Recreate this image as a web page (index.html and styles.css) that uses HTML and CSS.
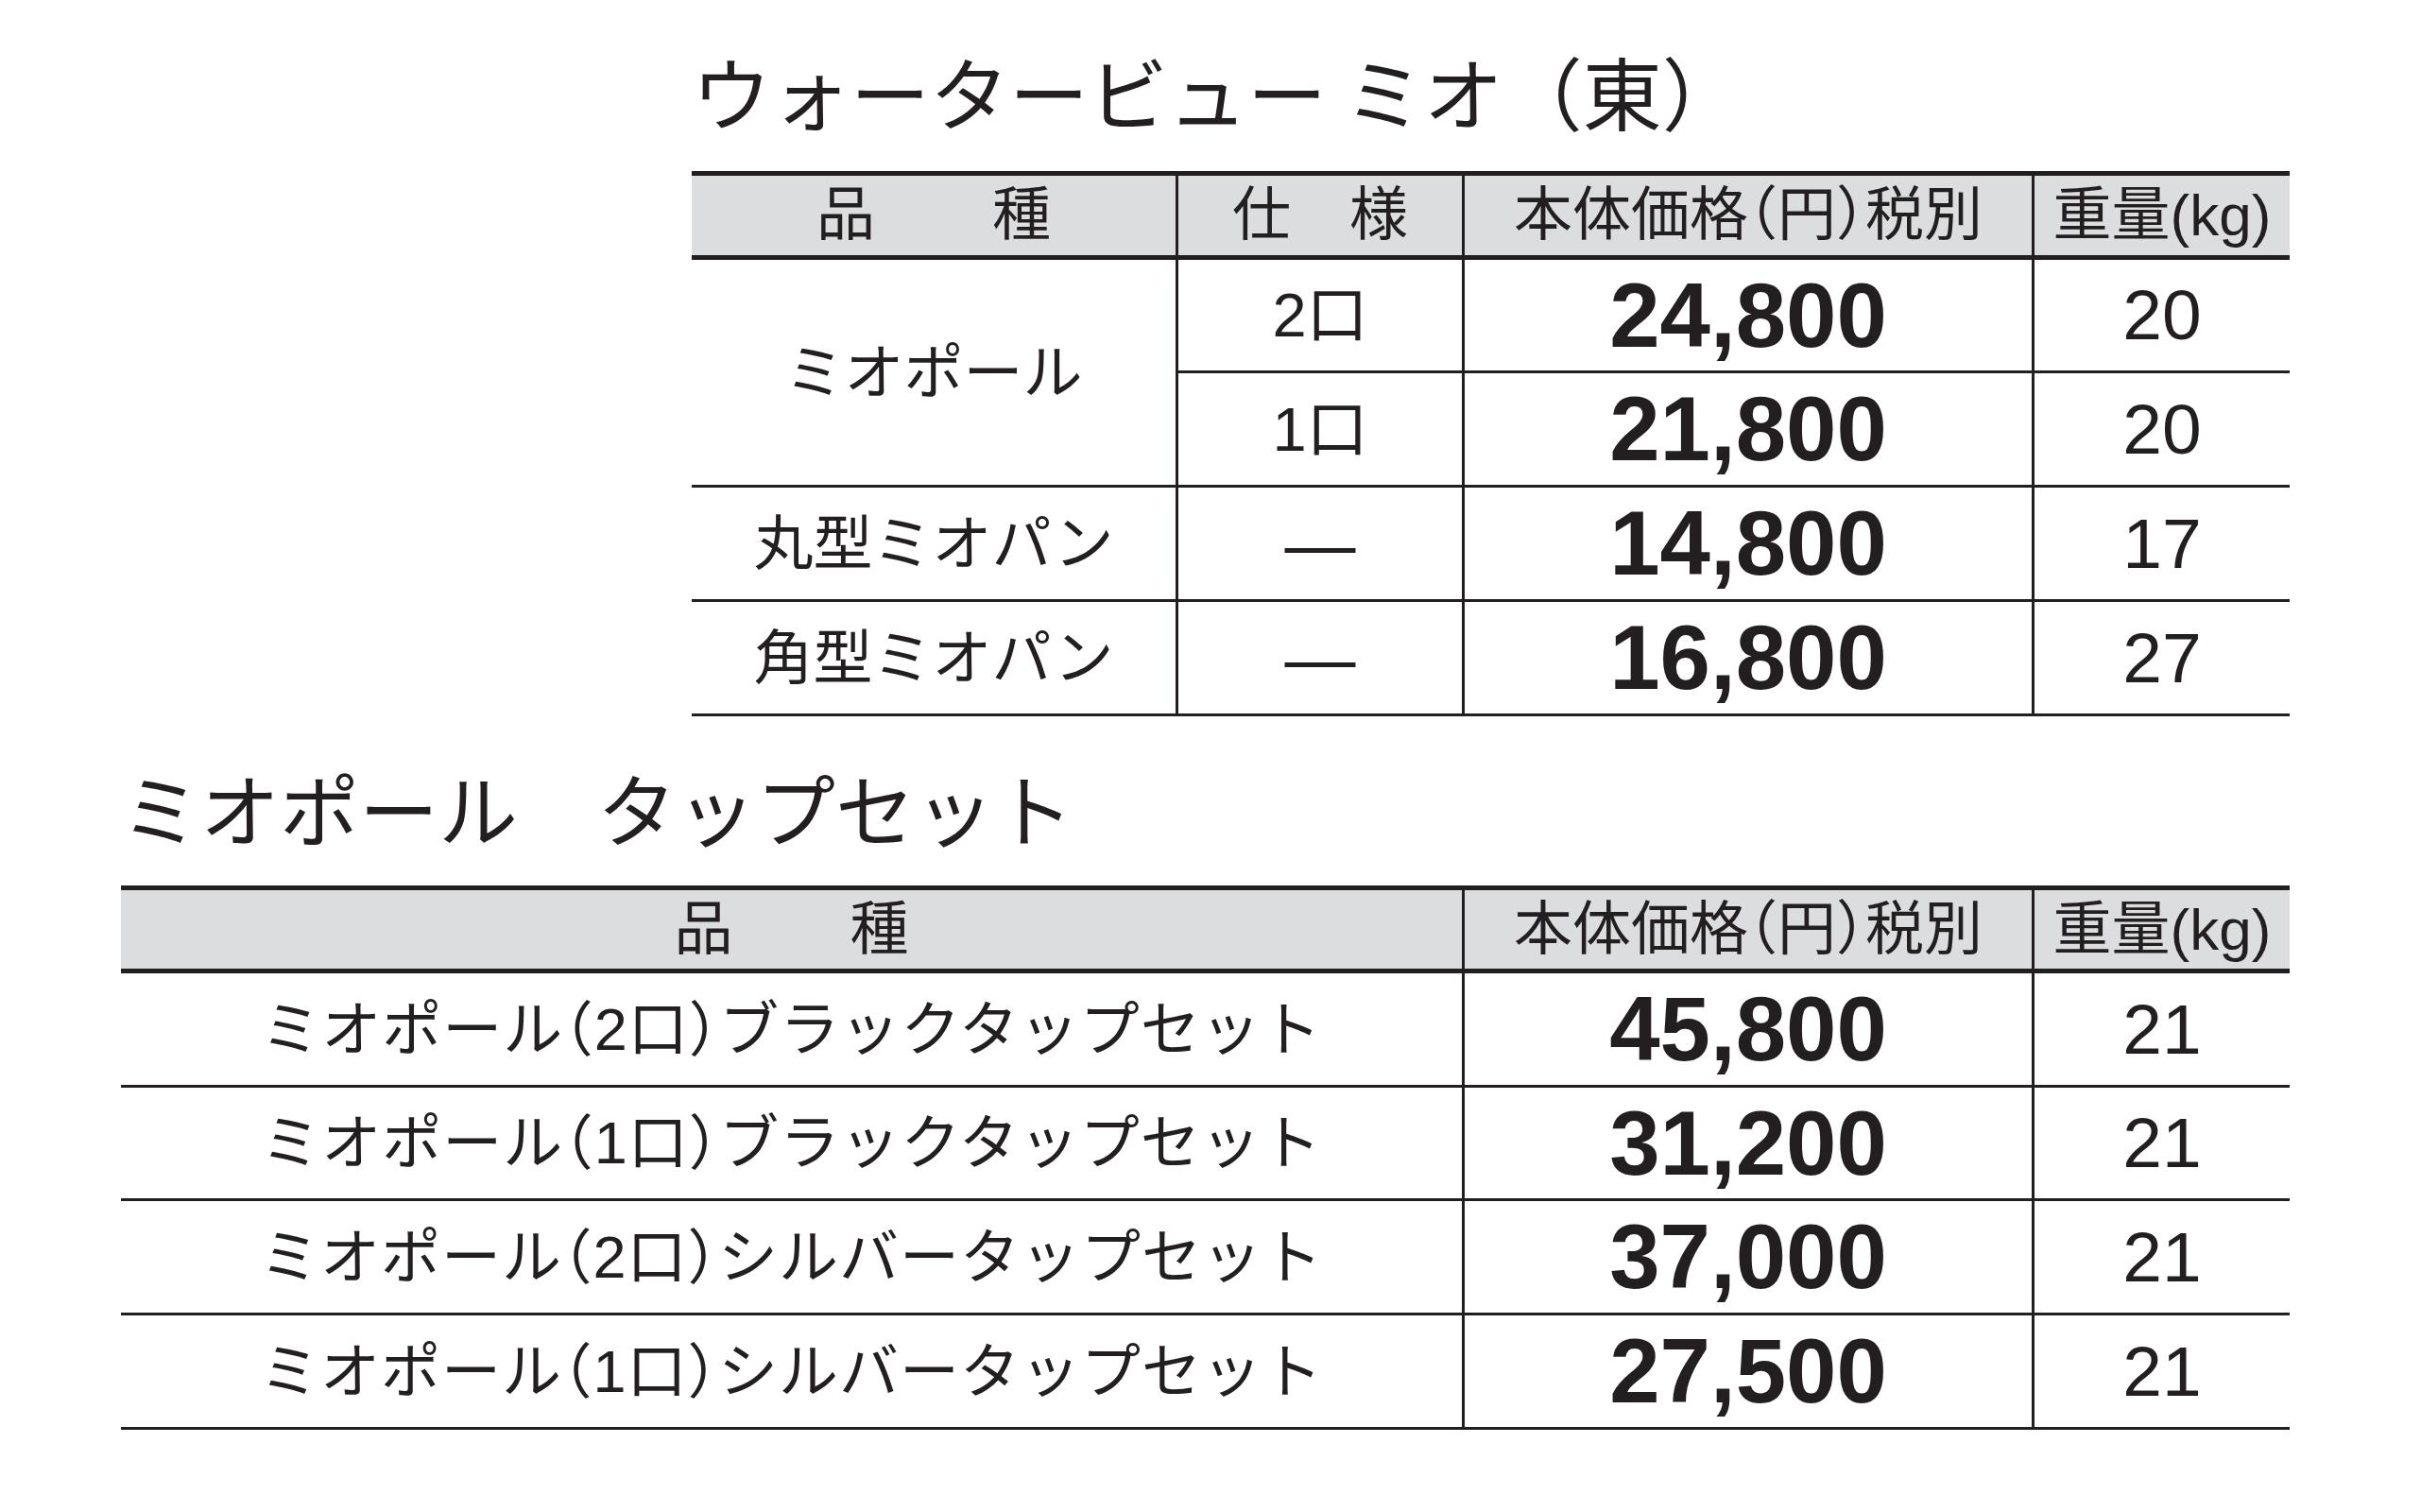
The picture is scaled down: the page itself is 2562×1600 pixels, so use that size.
FILE: index.html
```html
<!DOCTYPE html>
<html lang="ja">
<head>
<meta charset="utf-8">
<title>ウォータービュー ミオ（東）価格表</title>
<link rel="stylesheet" href="styles.css">
</head>
<body>
<div class="page">
  <section class="sec sec-east">
    <h1 class="title">ウォータービュー ミオ（東）</h1>
    <div class="tbl tbl-east">
      <div class="c h">品　　種</div>
      <div class="c h">仕　様</div>
      <div class="c h halt">本体価格（円）税別</div>
      <div class="c h last">重量(kg)</div>

      <div class="c name span2">ミオポール</div>
      <div class="c spec">2口</div>
      <div class="c price">24,800</div>
      <div class="c wt last">20</div>

      <div class="c spec">1口</div>
      <div class="c price">21,800</div>
      <div class="c wt last">20</div>

      <div class="c name">丸型ミオパン</div>
      <div class="c spec dash">—</div>
      <div class="c price">14,800</div>
      <div class="c wt last">17</div>

      <div class="c name">角型ミオパン</div>
      <div class="c spec dash">—</div>
      <div class="c price">16,800</div>
      <div class="c wt last">27</div>
    </div>
  </section>

  <section class="sec sec-tap">
    <h2 class="title">ミオポール　タップセット</h2>
    <div class="tbl tbl-tap">
      <div class="c h">品　　種</div>
      <div class="c h halt">本体価格（円）税別</div>
      <div class="c h last">重量(kg)</div>

      <div class="c name set">ミオポール（2口）ブラックタップセット</div>
      <div class="c price">45,800</div>
      <div class="c wt last">21</div>

      <div class="c name set">ミオポール（1口）ブラックタップセット</div>
      <div class="c price">31,200</div>
      <div class="c wt last">21</div>

      <div class="c name set">ミオポール（2口）シルバータップセット</div>
      <div class="c price">37,000</div>
      <div class="c wt last">21</div>

      <div class="c name set">ミオポール（1口）シルバータップセット</div>
      <div class="c price">27,500</div>
      <div class="c wt last">21</div>
    </div>
  </section>
</div>
</body>
</html>
```

FILE: styles.css
```css
* {
  box-sizing: border-box;
}

html, body {
  margin: 0;
  padding: 0;
  background: #ffffff;
}

body {
  color: #231f20;
  font-family: "Noto Sans CJK JP", sans-serif;
}

.page {
  width: 2562px;
  padding: 54px 0 0 128px;
}

.sec-east {
  margin-left: 604px;
  width: 1691px;
}

.sec-tap {
  width: 2295px;
  margin-top: 54px;
}

.title {
  margin: 0 0 43px 0;
  font-family: "Noto Sans CJK JP", sans-serif;
  font-weight: 400;
  font-size: 84px;
  line-height: 84px;
  white-space: nowrap;
}

.sec-tap .title {
  margin-bottom: 41px;
}

.tbl {
  display: grid;
  border-top: 5px solid #231f20;
}

.tbl-east {
  grid-template-columns: 515px 303px 603px 270px;
  grid-template-rows: 89px 120px 121px 121px 121px;
}

.tbl-tap {
  grid-template-columns: 1422px 603px 270px;
  grid-template-rows: 88px 121px 120px 121px 121px;
}

.c {
  display: flex;
  align-items: center;
  justify-content: center;
  border-right: 3px solid #231f20;
  border-bottom: 3px solid #231f20;
  font-family: "Liberation Sans", "Noto Sans CJK JP", sans-serif;
  font-size: 63px;
  line-height: 1;
  white-space: nowrap;
}

.c.last {
  border-right: none;
}

.h {
  background: #dcdddf;
  border-bottom-width: 5px;
  font-size: 62px;
}

.halt {
  font-feature-settings: "halt";
}

.set {
  font-feature-settings: "halt";
  letter-spacing: 1px;
}

.span2 {
  grid-row: span 2;
}

.spec {
  font-size: 65px;
}

.dash {
  font-size: 75px;
}

.price {
  font-weight: 700;
  font-size: 96px;
}

.wt {
  font-size: 75px;
}
```
